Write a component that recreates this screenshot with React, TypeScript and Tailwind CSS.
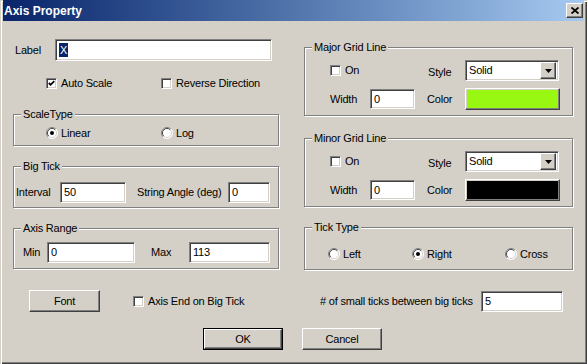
import React from "react";

const sunken =
  "bg-white border-t border-l border-t-[#808080] border-l-[#808080] border-b border-r border-b-white border-r-white shadow-[inset_1px_1px_0_#404040,inset_-1px_-1px_0_#d4d0c8]";
const raised =
  "bg-[#d4d0c8] border-t border-l border-t-white border-l-white border-b border-r border-b-[#404040] border-r-[#404040] shadow-[inset_-1px_-1px_0_#808080]";

function Check({ checked = false }: { checked?: boolean }) {
  return (
    <span className={`${sunken} w-[11px] h-[11px] shrink-0 flex items-center justify-center`}>
      {checked && (
        <svg width="7" height="7" viewBox="0 0 7 7">
          <polyline points="0.8,3 2.6,4.8 6.2,1.2" fill="none" stroke="#000" strokeWidth="1.8" />
        </svg>
      )}
    </span>
  );
}

function Radio({ checked = false }: { checked?: boolean }) {
  return (
    <svg width="12" height="12" viewBox="0 0 12 12" className="shrink-0">
      <circle cx="6" cy="6" r="5.5" fill="#fff" />
      <path d="M9.9 2.1 A5.5 5.5 0 0 0 2.1 9.9" fill="none" stroke="#808080" />
      <path d="M2.1 9.9 A5.5 5.5 0 0 0 9.9 2.1" fill="none" stroke="#fff" />
      <path d="M9.2 2.8 A4.5 4.5 0 0 0 2.8 9.2" fill="none" stroke="#404040" />
      <path d="M2.8 9.2 A4.5 4.5 0 0 0 9.2 2.8" fill="none" stroke="#d4d0c8" />
      <circle cx="6" cy="6" r="3.5" fill="#fff" />
      {checked && <circle cx="6" cy="6" r="2" fill="#000" />}
    </svg>
  );
}

function Group({
  title,
  className,
  children,
}: {
  title: string;
  className: string;
  children: React.ReactNode;
}) {
  return (
    <div className={`relative border border-[#808080] shadow-[1px_1px_0_#fff,inset_1px_1px_0_#fff] ${className}`}>
      <span className="absolute left-[7px] -top-[8px] bg-[#d4d0c8] px-[2px] leading-[14px]">{title}</span>
      {children}
    </div>
  );
}

function Dropdown() {
  return (
    <div className={`${sunken} w-[94px] h-[21px] flex items-center pl-[3px] pr-[2px]`}>
      <span className="flex-1">Solid</span>
      <span className={`${raised} w-[16px] h-[17px] flex items-center justify-center`}>
        <svg width="7" height="4" viewBox="0 0 7 4">
          <path d="M0 0 H7 L3.5 4 Z" fill="#000" />
        </svg>
      </span>
    </div>
  );
}

function GridLineGroup({ title, color }: { title: string; color: string }) {
  return (
    <>
      <div className="pt-[12px] pl-[25px] flex items-center h-[33px]">
        <div className="w-[98px] flex items-center gap-[4px]">
          <Check />
          <span>On</span>
        </div>
        <span className="w-[37px] pt-[3px]">Style</span>
        <Dropdown />
      </div>
      <div className="mt-[7px] pl-[25px] flex items-center h-[22px]">
        <span className="w-[40px]">Width</span>
        <div className={`${sunken} w-[45px] h-[20px] pl-[3px] flex items-center`}>0</div>
        <span className="ml-[12px] w-[38px]">Color</span>
        <div className={`${raised} w-[95px] h-[22px] p-px`}>
          <div className={`w-full h-full ${color}`} title={title} />
        </div>
      </div>
    </>
  );
}

function Button({ label, def = false, className }: { label: string; def?: boolean; className: string }) {
  if (def) {
    return (
      <div className={`border border-black ${className}`}>
        <div className={`${raised} w-full h-full flex items-center justify-center`}>{label}</div>
      </div>
    );
  }
  return <div className={`${raised} flex items-center justify-center ${className}`}>{label}</div>;
}

export default function App() {
  return (
    <div className="w-[587px] h-[364px] bg-[#d4d0c8] text-black text-[11px] tracking-[-0.2px] font-['Liberation_Sans',Arial,sans-serif] shadow-[inset_1px_1px_0_#d4d0c8,inset_2px_2px_0_#fff,inset_-1px_-1px_0_#404040,inset_-2px_-2px_0_#808080] flex flex-col overflow-hidden">
      {/* title bar */}
      <div className="mx-[3px] h-[21px] shrink-0 flex items-center bg-linear-to-r from-[#0a246a] to-[#a6caf0] pl-[1px] pr-[1px]">
        <span className="flex-1 text-white font-bold text-[12px] tracking-normal">Axis Property</span>
        <div className={`${raised} w-[17px] h-[15px] flex items-center justify-center`}>
          <svg width="8" height="7" viewBox="0 0 8 7">
            <path d="M0.5 0.5 L7.5 6.5 M7.5 0.5 L0.5 6.5" stroke="#000" strokeWidth="1.8" />
          </svg>
        </div>
      </div>

      <div className="flex pl-[13px]">
        {/* left column */}
        <div className="w-[266px] flex flex-col">
          <div className="mt-[18px] h-[22px] flex items-center">
            <span className="w-[42px] pl-[2px]">Label</span>
            <div className={`${sunken} w-[217px] h-[22px] pl-[3px] flex items-center`}>
              <span className="bg-[#0a246a] text-white leading-[14px] px-px">X</span>
            </div>
          </div>

          <div className="mt-[16px] h-[13px] pl-[33px] flex items-center">
            <div className="w-[115px] flex items-center gap-[4px]">
              <Check checked />
              <span>Auto Scale</span>
            </div>
            <div className="flex items-center gap-[4px]">
              <Check />
              <span>Reverse Direction</span>
            </div>
          </div>

          <Group title="ScaleType" className="mt-[24px] h-[32px]">
            <div className="h-full pt-[6px] pl-[32px] flex items-center">
              <div className="w-[115px] flex items-center gap-[3px]">
                <Radio checked />
                <span>Linear</span>
              </div>
              <div className="flex items-center gap-[3px]">
                <Radio />
                <span>Log</span>
              </div>
            </div>
          </Group>

          <Group title="Big Tick" className="mt-[20px] h-[42px]">
            <div className="h-full pt-[10px] pl-[2px] flex items-center">
              <span className="w-[44px]">Interval</span>
              <div className={`${sunken} w-[66px] h-[21px] pl-[3px] flex items-center`}>50</div>
              <span className="ml-[11px] w-[91px]">String Angle (deg)</span>
              <div className={`${sunken} w-[42px] h-[21px] pl-[3px] flex items-center`}>0</div>
            </div>
          </Group>

          <Group title="Axis Range" className="mt-[20px] h-[41px]">
            <div className="h-full pt-[7px] pl-[9px] flex items-center">
              <span className="w-[24px]">Min</span>
              <div className={`${sunken} w-[88px] h-[21px] pl-[3px] flex items-center`}>0</div>
              <span className="ml-[16px] w-[38px]">Max</span>
              <div className={`${sunken} w-[81px] h-[21px] pl-[3px] flex items-center`}>113</div>
            </div>
          </Group>
        </div>

        {/* right column */}
        <div className="ml-[25px] w-[269px] flex flex-col">
          <Group title="Major Grid Line" className="mt-[26px] h-[69px]">
            <GridLineGroup title="major" color="bg-[#98f812]" />
          </Group>

          <Group title="Minor Grid Line" className="mt-[22px] h-[69px]">
            <GridLineGroup title="minor" color="bg-black" />
          </Group>

          <Group title="Tick Type" className="mt-[20px] h-[43px]">
            <div className="h-full pt-[11px] pl-[23px] flex items-center">
              <div className="w-[84px] flex items-center gap-[3px]">
                <Radio />
                <span>Left</span>
              </div>
              <div className="w-[93px] flex items-center gap-[3px]">
                <Radio checked />
                <span>Right</span>
              </div>
              <div className="flex items-center gap-[3px]">
                <Radio />
                <span>Cross</span>
              </div>
            </div>
          </Group>
        </div>
      </div>

      {/* bottom options */}
      <div className="mt-[20px] h-[22px] pl-[29px] flex items-center">
        <div className="w-[291px] flex items-center">
          <Button label="Font" className="w-[71px] h-[22px]" />
          <div className="ml-[33px] flex items-center gap-[4px]">
            <Check />
            <span>Axis End on Big Tick</span>
          </div>
        </div>
        <span className="w-[161px]"># of small ticks between big ticks</span>
        <div className={`${sunken} w-[82px] h-[21px] pl-[3px] flex items-center`}>5</div>
      </div>

      <div className="mt-[16px] pl-[203px] flex">
        <Button label="OK" def className="w-[80px] h-[22px]" />
        <Button label="Cancel" className="ml-[19px] w-[80px] h-[22px]" />
      </div>
    </div>
  );
}
